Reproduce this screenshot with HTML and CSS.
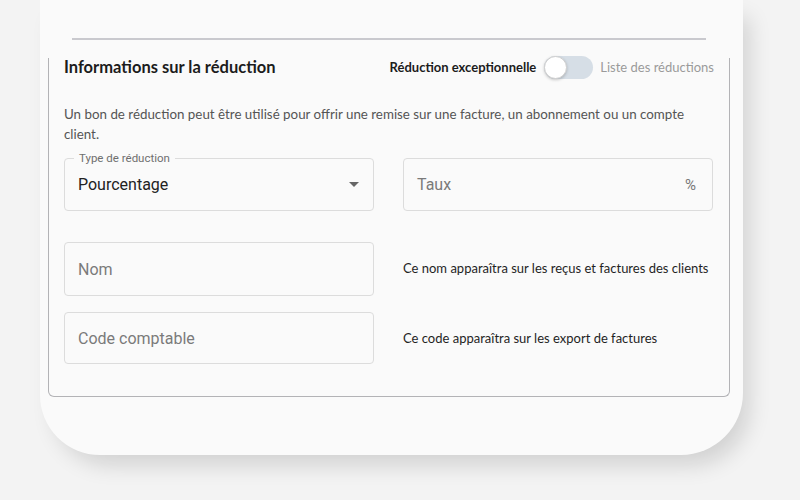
FILE: index.html
```html
<!DOCTYPE html>
<html lang="fr">
<head>
<meta charset="utf-8">
<title>Informations sur la réduction</title>
<link rel="stylesheet" href="styles.css">
</head>
<body>
<div class="panel">
  <div class="rule"></div>
  <section class="card">
    <header class="card-head">
      <h2 class="title">Informations sur la réduction</h2>
      <div class="switch-row">
        <span class="switch-label">Réduction exceptionnelle</span>
        <span class="switch"><span class="thumb"></span></span>
        <span class="switch-alt">Liste des réductions</span>
      </div>
    </header>
    <p class="desc">Un bon de réduction peut être utilisé pour offrir une remise sur une facture, un abonnement ou un compte client.</p>
    <div class="grid">
      <div class="field field-select">
        <span class="legend">Type de réduction</span>
        <span class="value">Pourcentage</span>
        <svg class="arrow" width="10" height="5" viewBox="0 0 10 5"><path d="M0 0 L10 0 L5 5 Z" fill="#666"/></svg>
      </div>
      <div class="field">
        <span class="placeholder">Taux</span>
        <span class="suffix">%</span>
      </div>
      <div class="field row2">
        <span class="placeholder">Nom</span>
      </div>
      <p class="helper row2">Ce nom apparaîtra sur les reçus et factures des clients</p>
      <div class="field row3">
        <span class="placeholder">Code comptable</span>
      </div>
      <p class="helper row3">Ce code apparaîtra sur les export de factures</p>
    </div>
  </section>
</div>
</body>
</html>
```
FILE: styles.css
```css
html, body {
  margin: 0;
  padding: 0;
}
body {
  width: 800px;
  height: 500px;
  overflow: hidden;
  background: #f3f3f3;
  font-family: "Lato", "Open Sans", sans-serif;
}
.panel {
  margin-left: 40px;
  width: 703px;
  height: 455px;
  box-sizing: border-box;
  padding-top: 38px;
  background: #fafafa;
  border-radius: 0 0 62px 60px;
  box-shadow: 10px 14px 22px -4px rgba(0, 0, 0, 0.14);
}
.rule {
  margin-left: 32px;
  width: 634px;
  height: 2px;
  background: #c9c9ce;
}
.card {
  margin-top: 18px;
  margin-left: 8px;
  width: 682px;
  height: 339px;
  box-sizing: border-box;
  border: 1px solid #b3b3b6;
  border-top: none;
  border-radius: 0 0 6px 6px;
  padding: 0 15px;
}
.card-head {
  display: flex;
  justify-content: space-between;
  align-items: center;
  height: 18px;
}
.title {
  margin: 0;
  font-size: 16.5px;
  font-weight: 700;
  color: #1c1c1c;
  line-height: 18px;
}
.switch-row {
  display: flex;
  align-items: center;
}
.switch-label {
  font-size: 13px;
  font-weight: 700;
  color: #1c1c1c;
}
.switch {
  margin-left: 8px;
  width: 49px;
  height: 23px;
  border-radius: 12px;
  background: #d6dee6;
  display: flex;
  align-items: center;
}
.thumb {
  width: 23px;
  height: 23px;
  box-sizing: border-box;
  border-radius: 50%;
  background: #ffffff;
  border: 1px solid #cfcfcf;
  box-shadow: 0 1px 3px rgba(0, 0, 0, 0.2);
}
.switch-alt {
  margin-left: 7px;
  font-size: 13px;
  color: #9a9a9a;
}
.desc {
  margin: 28px 0 0 0;
  width: 640px;
  font-size: 13.35px;
  line-height: 20px;
  color: #555555;
}
.grid {
  margin-top: 14px;
  display: grid;
  grid-template-columns: 310px 310px;
  column-gap: 29px;
  grid-template-rows: 53px 85px 68px;
  align-items: start;
}
.field {
  position: relative;
  box-sizing: border-box;
  height: 53px;
  border: 1px solid #dcdcdc;
  border-radius: 4px;
  display: flex;
  align-items: center;
  padding: 0 14px 0 13px;
  font-family: "Roboto", sans-serif;
  font-size: 16px;
}
.field.row2 {
  margin-top: 31px;
  height: 54px;
}
.field.row3 {
  margin-top: 16px;
  height: 52px;
}
.grid .row2 { grid-row: 2; }
.grid .row3 { grid-row: 3; }
.legend {
  position: absolute;
  top: -8px;
  left: 9px;
  padding: 0 5px;
  background: #fafafa;
  font-size: 11.5px;
  color: #6f6f6f;
  line-height: 14px;
}
.value {
  color: #222222;
}
.placeholder {
  color: #7a7a7a;
}
.arrow {
  margin-left: auto;
}
.suffix {
  margin-left: auto;
  margin-right: 2px;
  color: #777777;
  font-size: 15px;
}
.helper {
  margin: 0;
  font-size: 13px;
  color: #1f1f1f;
  line-height: 16px;
}
.helper.row2 {
  margin-top: 49px;
}
.helper.row3 {
  margin-top: 34px;
}
```
